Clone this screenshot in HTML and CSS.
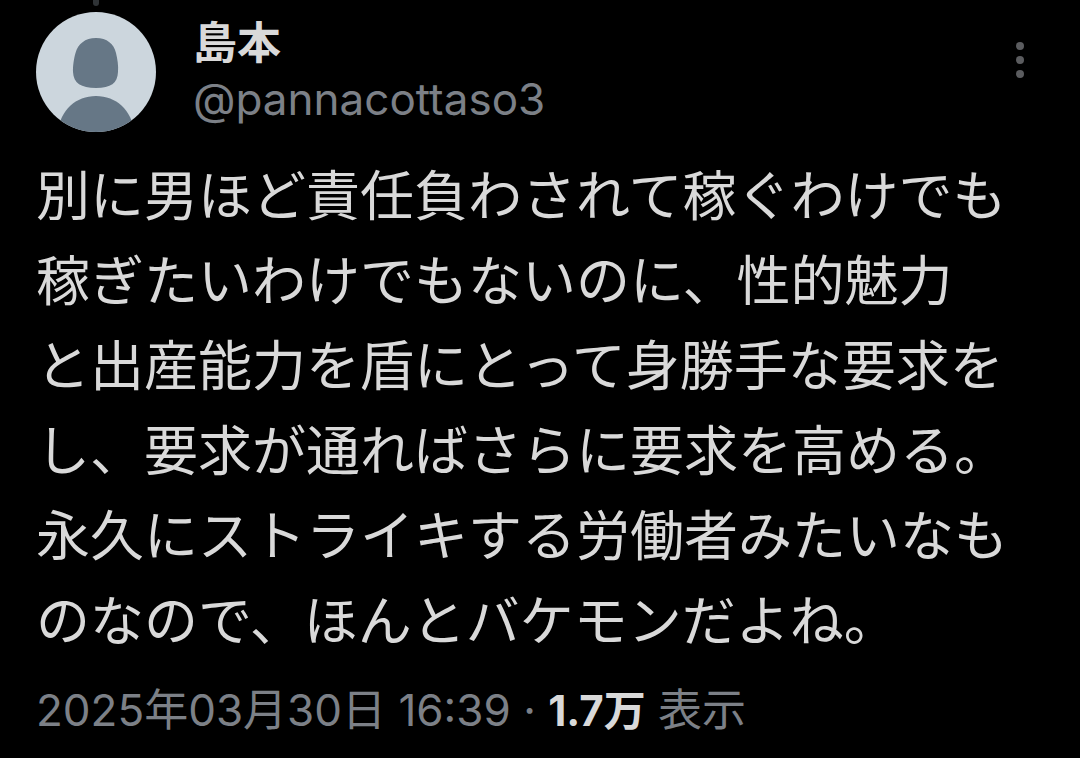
FILE: index.html
```html
<!DOCTYPE html>
<html lang="ja">
<head>
<meta charset="utf-8">
<meta name="viewport" content="width=device-width, initial-scale=1">
<title>島本</title>
<link rel="stylesheet" href="styles.css">
</head>
<body>
<article class="post">
  <header class="post-header">
    <div class="avatar-column">
      <span class="thread-line"></span>
      <svg class="avatar" viewBox="0 0 120 120" role="img" aria-label="島本">
        <defs><clipPath id="avatar-clip"><circle cx="60" cy="60" r="60"/></clipPath></defs>
        <g clip-path="url(#avatar-clip)">
          <rect width="120" height="120" fill="#ccd6dd"/>
          <path fill="#667786" d="M60 26C71 26 78 32 80 41C81.500 47 82.500 54 82 60C81.500 71 75 76 60 76C45 76 37.500 71 37 60C36.700 54 38 46 39.500 41C42 32 49 26 60 26Z"/>
          <path fill="#667786" d="M22 120C24 98 40 84 60 84S96 98 98 120Z"/>
        </g>
      </svg>
    </div>
    <div class="author">
      <span class="name">島本</span>
      <span class="handle">@pannacottaso3</span>
    </div>
    <button class="more" type="button" aria-label="もっと見る">
      <svg class="more-icon" viewBox="0 0 8 36" aria-hidden="true">
        <circle cx="4" cy="4" r="4"/><circle cx="4" cy="18" r="4"/><circle cx="4" cy="32" r="4"/>
      </svg>
    </button>
  </header>
  <p class="post-text">別に男ほど責任負わされて稼ぐわけでも<br>稼ぎたいわけでもないのに、性的魅力<br>と出産能力を盾にとって身勝手な要求を<br>し、要求が通ればさらに要求を高める。<br>永久にストライキする労働者みたいなも<br>のなので、ほんとバケモンだよね。</p>
  <footer class="meta"><time datetime="2025-03-30T16:39">2025年03月30日 16:39</time> · <strong class="count">1.7万</strong> 表示</footer>
</article>
</body>
</html>
```
FILE: styles.css
```css
* {
  box-sizing: border-box;
}

body {
  margin: 0;
  background: #000;
  color: #d9d9d9;
  font-family: Inter, "Noto Sans CJK JP", sans-serif;
}

.post {
  padding: 0 36px;
}

.post-header {
  display: flex;
  align-items: flex-start;
}

.avatar-column {
  display: flex;
  flex-direction: column;
  align-items: center;
  gap: 6px;
}

.thread-line {
  width: 6px;
  height: 6px;
  border-radius: 0 0 3px 3px;
  background: #2f3336;
}

.avatar {
  display: block;
  width: 120px;
  height: 120px;
}

.author {
  display: flex;
  flex: 1;
  flex-direction: column;
  padding: 15px 0 0 37px;
  font-size: 44px;
  line-height: 56px;
}

.name {
  font-weight: 700;
}

.handle {
  color: #7c8087;
}

.more {
  display: flex;
  margin-top: 42px;
  padding: 0 20px;
  border: 0;
  background: none;
}

.more-icon {
  width: 8px;
  height: 36px;
  fill: #5b5c5f;
}

.post-text {
  margin: 18px 0 0;
  font-family: "Noto Sans CJK JP", sans-serif;
  font-size: 54px;
  line-height: 85px;
  white-space: nowrap;
}

.meta {
  margin-top: 22px;
  color: #7c8087;
  font-size: 44px;
  line-height: 56px;
}

.count {
  color: #d9d9d9;
  font-size: 42px;
  font-weight: 700;
}
```
